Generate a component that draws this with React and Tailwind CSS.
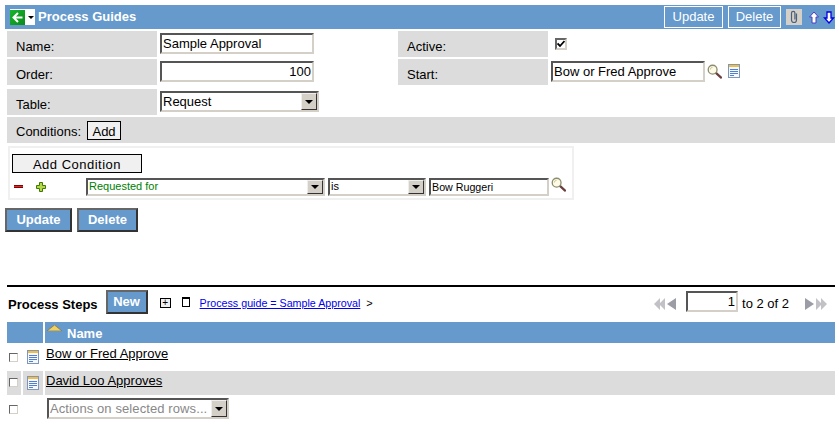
import React from 'react';

const inset = 'border-2 border-t-[#555] border-l-[#555] border-r-[#d4d0c8] border-b-[#d4d0c8] bg-white';

const Label = ({ children, className = '' }) => (
  <div className={`h-[26px] w-[150px] bg-[#dcdcdc] pl-[9px] pt-[8px] leading-[15px] text-black ${className}`}>{children}</div>
);

const TextBox = ({ value, className = '' }) => (
  <input readOnly value={value} className={`${inset} h-[21px] px-[1px] text-[13px] leading-[15px] outline-none ${className}`} />
);

const ArrowBtn = ({ size = 'h-[17px] w-[16px]' }) => (
  <span className={`${size} flex items-center justify-center bg-[#d4d0c8] border border-t-[#eee] border-l-[#eee] border-r-[#333] border-b-[#333]`}>
    <span className="border-x-[4px] border-t-[4px] border-x-transparent border-t-black" />
  </span>
);

const Select = ({ value, className = '', text = 'text-black', size }) => (
  <div className={`${inset} flex items-center justify-between ${className}`}>
    <span className={`pl-[1px] leading-[15px] whitespace-nowrap ${text}`}>{value}</span>
    <ArrowBtn size={size} />
  </div>
);

const Magnifier = ({ className = '' }) => (
  <svg width="15" height="15" viewBox="0 0 16 16" className={className}>
    <path d="M9.5 9.5L15 14.5" stroke="#6b3f3f" strokeWidth="2.4" strokeLinecap="round" />
    <circle cx="6" cy="6" r="4.7" fill="#fdfbe6" stroke="#8c8c70" strokeWidth="1.4" />
    <path d="M3.5 6a2.5 2.5 0 0 1 2.5-2.5" stroke="#c9c59a" fill="none" />
  </svg>
);

const DocIcon = ({ className = '' }) => (
  <svg width="12" height="14" viewBox="0 0 12 14" className={className}>
    <rect x="0.5" y="0.5" width="11" height="13" fill="#f4f8fd" stroke="#7e97b8" />
    <rect x="1" y="1" width="10" height="2" fill="#f5bd3c" />
    <path d="M2 5.5h8M2 7.5h8M2 9.5h8M2 11.5h4" stroke="#4f80d0" />
  </svg>
);

const Check = ({ className = '', checked = false }) => (
  <span className={`flex items-center justify-center border-2 border-t-[#666] border-l-[#666] border-r-[#d4d0c8] border-b-[#d4d0c8] bg-white ${className}`}>
    {checked && (
      <svg width="8" height="8" viewBox="0 0 8 8">
        <path d="M0.5 3.5L3 6L7.5 1" fill="none" stroke="#000" strokeWidth="1.8" />
      </svg>
    )}
  </span>
);

const SolidBtn = ({ children, className = '' }) => (
  <button className={`h-[24px] bg-[#6699cc] border-2 border-t-[#666] border-l-[#666] border-r-[#333] border-b-[#333] font-bold text-white text-[13px] leading-[15px] pb-[1px] ${className}`}>
    {children}
  </button>
);

const App = () => {
  return (
    <div className="h-[427px] w-[839px] overflow-hidden bg-white font-['Liberation_Sans',sans-serif] text-[13px] text-black">
      {/* title bar */}
      <div className="ml-[5px] mr-[4px] mt-[5px] flex h-[24px] items-center bg-[#6699cc]">
        <div className="ml-[5px] flex h-[16px] w-[25px] items-center bg-white">
          <svg width="15" height="15" viewBox="0 0 15 15">
            <defs>
              <linearGradient id="g" x1="0" y1="0" x2="1" y2="1">
                <stop offset="0" stopColor="#19b52c" />
                <stop offset="1" stopColor="#0a8a1c" />
              </linearGradient>
            </defs>
            <rect width="15" height="15" fill="url(#g)" />
            <path d="M8 3L3.5 7.5L8 12M4 7.5H12.5" stroke="#fff" strokeWidth="2" fill="none" />
          </svg>
          <span className="ml-[3px] border-x-[3px] border-t-[3px] border-x-transparent border-t-black" />
        </div>
        <span className="ml-[3px] text-[13px] font-bold text-white">Process Guides</span>
        <div className="ml-auto flex items-center">
          <button className="h-[22px] w-[59px] border border-white pb-[1px] text-white">Update</button>
          <button className="ml-[5px] h-[22px] w-[53px] border border-white pb-[1px] text-white">Delete</button>
          <span className="ml-[5px] flex h-[16px] w-[16px] items-center justify-center bg-[#d4d0c8]">
            <svg width="10" height="14" viewBox="0 0 10 14">
              <path d="M7.5 3.5V10a2.5 2.5 0 0 1-5 0V3a1.7 1.7 0 0 1 3.4 0v6.5" fill="none" stroke="#47617f" strokeWidth="1.2" />
            </svg>
          </span>
          <svg width="12" height="13" viewBox="0 0 12 13" className="ml-[6px]">
            <path d="M6 1L10.5 6H8V12H4V6H1.5Z" fill="#fff" stroke="#4a3fc0" />
          </svg>
          <svg width="12" height="13" viewBox="0 0 12 13" className="ml-[3px]">
            <path d="M6 12L10.5 7H8V1H4V7H1.5Z" fill="#fff" stroke="#0000e0" strokeWidth="1.3" />
          </svg>
        </div>
      </div>

      {/* form */}
      <div className="ml-[7px] mr-[4px] mt-[2px]">
        <div className="flex items-start">
          <Label>Name:</Label>
          <TextBox value="Sample Approval" className="ml-[3px] mt-[2px] w-[154px]" />
          <Label className="ml-[84px]">Active:</Label>
          <Check checked className="ml-[7px] mt-[7px] h-[12px] w-[12px]" />
        </div>
        <div className="mt-[2px] flex items-start">
          <Label>Order:</Label>
          <TextBox value="100" className="ml-[3px] mt-[2px] w-[154px] text-right" />
          <Label className="ml-[84px]">Start:</Label>
          <TextBox value="Bow or Fred Approve" className="ml-[3px] mt-[2px] w-[154px]" />
          <Magnifier className="ml-[2px] mt-[5px]" />
          <DocIcon className="ml-[6px] mt-[5px]" />
        </div>
        <div className="mt-[4px] flex items-start">
          <Label>Table:</Label>
          <Select value="Request" className="ml-[3px] mt-[2px] h-[21px] w-[159px]" />
        </div>
        <div className="mt-[2px] flex h-[26px] items-center bg-[#dcdcdc] pl-[9px]">
          <span className="mt-[4px]">Conditions:</span>
          <button className="ml-[6px] mt-[1px] h-[19px] w-[34px] border border-black bg-[#f0f0f0] pb-[1px]">Add</button>
        </div>
      </div>

      {/* filter box */}
      <div className="ml-[8px] mt-[3px] h-[54px] w-[566px] border-2 border-[#f0f0f0] px-[2px] pt-[6px]">
        <button className="h-[19px] w-[130px] border border-black bg-[#f0f0f0] pb-[3px] tracking-[0.5px]">Add Condition</button>
        <div className="mt-[3px] flex items-center text-[11px]">
          <span className="ml-[2px] h-[3px] w-[9px] border-y border-[#8a0000] bg-[#cc3333]" />
          <svg width="10" height="10" viewBox="0 0 10 10" className="ml-[13px]">
            <path d="M3.5 0.5h3v3h3v3h-3v3h-3v-3h-3v-3h3z" fill="#b6d64a" stroke="#3f7a00" />
          </svg>
          <Select value="Requested for" text="text-[#008000]" size="h-[14px] w-[16px]" className="ml-[40px] h-[18px] w-[239px]" />
          <Select value="is" size="h-[14px] w-[16px]" className="ml-[3px] h-[18px] w-[98px]" />
          <TextBox value="Bow Ruggeri" className="ml-[3px] !h-[18px] w-[120px] !text-[10.7px]" />
          <Magnifier className="ml-[2px] -mt-[5px]" />
        </div>
      </div>

      <div className="ml-[5px] mt-[8px] flex gap-[5px]">
        <SolidBtn className="w-[67px]">Update</SolidBtn>
        <SolidBtn className="w-[61px]">Delete</SolidBtn>
      </div>

      {/* process steps */}
      <div className="ml-[7px] mr-[4px] mt-[53px] h-[2px] bg-black" />
      <div className="ml-[8px] mr-[4px] mt-[3px] flex h-[24px] items-start">
        <span className="mt-[5px] font-bold">Process Steps</span>
        <SolidBtn className="ml-[8px] w-[42px]">New</SolidBtn>
        <span className="ml-[12px] mt-[8px] flex h-[10px] w-[11px] items-center justify-center border border-black bg-[#eee] text-[10px] leading-none">+</span>
        <span className="ml-[11px] mt-[7px] h-[10px] w-[8px] border border-black border-t-2" />
        <a className="ml-[10px] mt-[5px] text-[10.7px] text-[#0000ee] underline">Process guide = Sample Approval</a>
        <span className="ml-[6px] mt-[5px] text-[11px]">&gt;</span>
        <div className="ml-auto flex items-start">
          <svg width="22" height="12" viewBox="0 0 22 12" className="mt-[8px]">
            <path d="M0 6L6 0v12zM5 6L11 0v12z" fill="#c2c2c6" />
            <path d="M13 6L22 0v12z" fill="#9c9ca6" />
          </svg>
          <TextBox value="1" className="ml-[10px] mt-[1px] w-[52px] text-right" />
          <span className="ml-[4px] mt-[4px]">to 2 of 2</span>
          <svg width="22" height="12" viewBox="0 0 22 12" className="ml-[16px] mr-[8px] mt-[8px]">
            <path d="M0 0l9 6L0 12z" fill="#9c9ca6" />
            <path d="M11 0l6 6L11 12zM16 0l6 6L16 12z" fill="#c2c2c6" />
          </svg>
        </div>
      </div>

      {/* table */}
      <div className="ml-[7px] mr-[4px] mt-[8px]">
        <div className="flex h-[21px] gap-[2px]">
          <div className="w-[36px] bg-[#6699cc]" />
          <div className="flex flex-1 items-center bg-[#6699cc] pl-[2px]">
            <svg width="15" height="6" viewBox="0 0 15 6" className="-mt-[9px]">
              <path d="M0 6L7.5 0L15 6z" fill="#f2d060" stroke="#8a7030" strokeWidth="0.7" />
            </svg>
            <span className="ml-[5px] mt-[3px] font-bold text-white">Name</span>
          </div>
        </div>
        <div className="flex h-[28px] gap-[2px]">
          <div className="w-[14px] pl-[2px] pt-[10px]"><Check className="h-[9px] w-[9px] !border" /></div>
          <div className="w-[20px] pl-[4px] pt-[7px]"><DocIcon /></div>
          <a className="ml-[1px] pt-[1px] underline">Bow or Fred Approve</a>
        </div>
        <div className="flex h-[24px] gap-[2px]">
          <div className="w-[14px] bg-[#dcdcdc] pl-[2px] pt-[7px]"><Check className="h-[9px] w-[9px] !border" /></div>
          <div className="w-[20px] bg-[#dcdcdc] pl-[4px] pt-[5px]"><DocIcon /></div>
          <a className="flex-1 bg-[#dcdcdc] pl-[1px]"><span className="underline">David Loo Approves</span></a>
        </div>
        <div className="flex h-[24px] gap-[2px] pt-[3px]">
          <div className="w-[14px] pl-[2px] pt-[7px]"><Check className="h-[9px] w-[9px] !border" /></div>
          <div className="w-[20px]" />
          <Select value="Actions on selected rows..." text="text-[#888] tracking-[0.1px]" className="ml-[2px] h-[21px] w-[182px]" />
        </div>
      </div>
    </div>
  );
};

export default App;
